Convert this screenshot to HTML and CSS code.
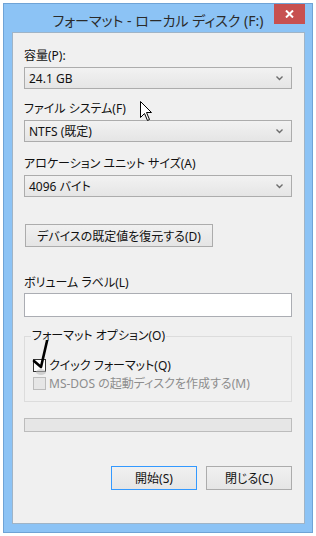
FILE: index.html
```html
<!DOCTYPE html>
<html>
<head>
    <link rel="stylesheet" href="styles.css">
</head>
<body>
    <div class="window">
        <div class="titlebar">
            <span class="title">フォーマット - ローカル ディスク (F:)</span>
            <div class="close_btn">
                <svg width="9" height="8" viewBox="0 0 9 8"><path d="M1 0.5 L8 7.5 M8 0.5 L1 7.5" stroke="#fff" stroke-width="2"/></svg>
            </div>
        </div>
        <div class="content">
            <div class="label lbl_cap">容量(P):</div>
            <div class="select"><span>24.1 GB</span><svg class="arrow" width="7" height="5" viewBox="0 0 7 5"><path d="M0.5 0.5 L3.5 3.5 L6.5 0.5" fill="none" stroke="#6d6d6d" stroke-width="1.4"/></svg></div>

            <div class="label lbl_fs">ファイル システム(F)</div>
            <div class="select"><span>NTFS (既定)</span><svg class="arrow" width="7" height="5" viewBox="0 0 7 5"><path d="M0.5 0.5 L3.5 3.5 L6.5 0.5" fill="none" stroke="#6d6d6d" stroke-width="1.4"/></svg></div>

            <div class="label lbl_unit">アロケーション ユニット サイズ(A)</div>
            <div class="select"><span>4096 バイト</span><svg class="arrow" width="7" height="5" viewBox="0 0 7 5"><path d="M0.5 0.5 L3.5 3.5 L6.5 0.5" fill="none" stroke="#6d6d6d" stroke-width="1.4"/></svg></div>

            <button class="btn btn_restore">デバイスの既定値を復元する(D)</button>

            <div class="label lbl_vol">ボリューム ラベル(L)</div>
            <div class="textbox"></div>

            <fieldset class="group">
                <legend>フォーマット オプション(O)</legend>
                <div class="check_row">
                    <span class="checkbox"></span><span>クイック フォーマット(Q)</span>
                </div>
                <div class="check_row disabled">
                    <span class="checkbox"></span><span>MS-DOS の起動ディスクを作成する(M)</span>
                </div>
            </fieldset>

            <div class="progress"></div>

            <div class="btn_row">
                <button class="btn btn_default">開始(S)</button>
                <button class="btn">閉じる(C)</button>
            </div>
        </div>
    </div>

    <!-- pen check mark drawn over the quick format box -->
    <svg class="pen_mark" width="24" height="40" viewBox="0 0 24 40">
        <ellipse cx="9" cy="32" rx="5" ry="3" fill="#bbb" opacity="0.6"/>
        <path d="M2 21 L9 27 L15 1" fill="none" stroke="#000" stroke-width="2.6" stroke-linecap="round" stroke-linejoin="round"/>
    </svg>

    <svg class="cursor" width="13" height="21" viewBox="0 0 13 21">
        <path d="M0.5 0.5 L0.5 16.5 L4.5 12.5 L7.5 19.5 L9.5 18.5 L6.5 11.5 L11.5 11.5 Z" fill="#fff" stroke="#000" stroke-width="1"/>
    </svg>
</body>
</html>
```

FILE: styles.css
```css
body { margin: 0; background: #fff; font-family: "Noto Sans", "Noto Sans CJK JP", sans-serif; font-size: 12px; color: #111; }

.window { margin: 3px; width: 310px; height: 530px; box-sizing: border-box; background: #8cc3f5; border: 1px solid #6fa3d6; display: flex; flex-direction: column; }
.titlebar { height: 28px; position: relative; display: flex; justify-content: center; align-items: center; }
.title { font-size: 14px; color: #2b2b2b; font-feature-settings: "palt"; padding-top: 4px; }
.close_btn { position: absolute; top: 0; right: 7px; width: 31px; height: 20px; background: #c75050; display: flex; align-items: center; justify-content: center; }

.content { margin: 0 7px 8px 8px; flex: 1; background: #f0f0f0; border: 1px solid #9fb4c7; padding: 0 12px 0 11px; display: flex; flex-direction: column; align-items: flex-start; font-feature-settings: "palt"; }

.label { line-height: 16px; height: 16px; }
.lbl_cap { margin-top: 15px; }
.lbl_fs { margin-top: 12px; }
.lbl_unit { margin-top: 14px; }
.lbl_vol { margin-top: 28px; }

.select { margin-top: 3px; width: 268px; height: 22px; box-sizing: border-box; border: 1px solid #acacac; background: linear-gradient(#f2f2f2, #e5e5e5); display: flex; align-items: center; justify-content: space-between; padding: 0 8px 0 4px; }
.arrow { margin-top: 1px; }

.btn { font-family: inherit; font-size: 12px; color: #111; height: 24px; box-sizing: border-box; border: 1px solid #acacac; background: linear-gradient(#f0f0f0, #e5e5e5); padding: 0; font-feature-settings: "palt"; }
.btn_restore { margin: 27px 0 0 1px; width: 188px; height: 23px; }
.btn_default { border-color: #3399ff; }

.textbox { margin-top: 2px; width: 268px; height: 24px; box-sizing: border-box; border: 1px solid #abadb3; background: #fff; }

.group { margin: 11px 0 0 0; width: 268px; box-sizing: border-box; border: 1px solid #dcdcdc; padding: 13px 6px 10px 6px; min-width: 0; }
.group legend { padding: 0 1px; line-height: 16px; }
.check_row { display: flex; align-items: center; height: 16px; margin-left: 2px; }
.check_row + .check_row { margin-top: 2px; }
.checkbox { width: 13px; height: 13px; box-sizing: border-box; border: 1px solid #333; background: #fff; margin-right: 3px; }
.disabled { color: #8d8d8d; }
.disabled .checkbox { border-color: #bcbcbc; background: #e6e6e6; }

.progress { margin-top: 16px; width: 268px; height: 14px; box-sizing: border-box; border: 1px solid #bcbcbc; background: #e6e6e6; }

.btn_row { margin-top: 34px; width: 268px; display: flex; justify-content: flex-end; gap: 9px; }
.btn_row .btn { width: 86px; }

.pen_mark { position: absolute; left: 32px; top: 340px; }
.cursor { position: absolute; left: 140px; top: 101px; }
```
